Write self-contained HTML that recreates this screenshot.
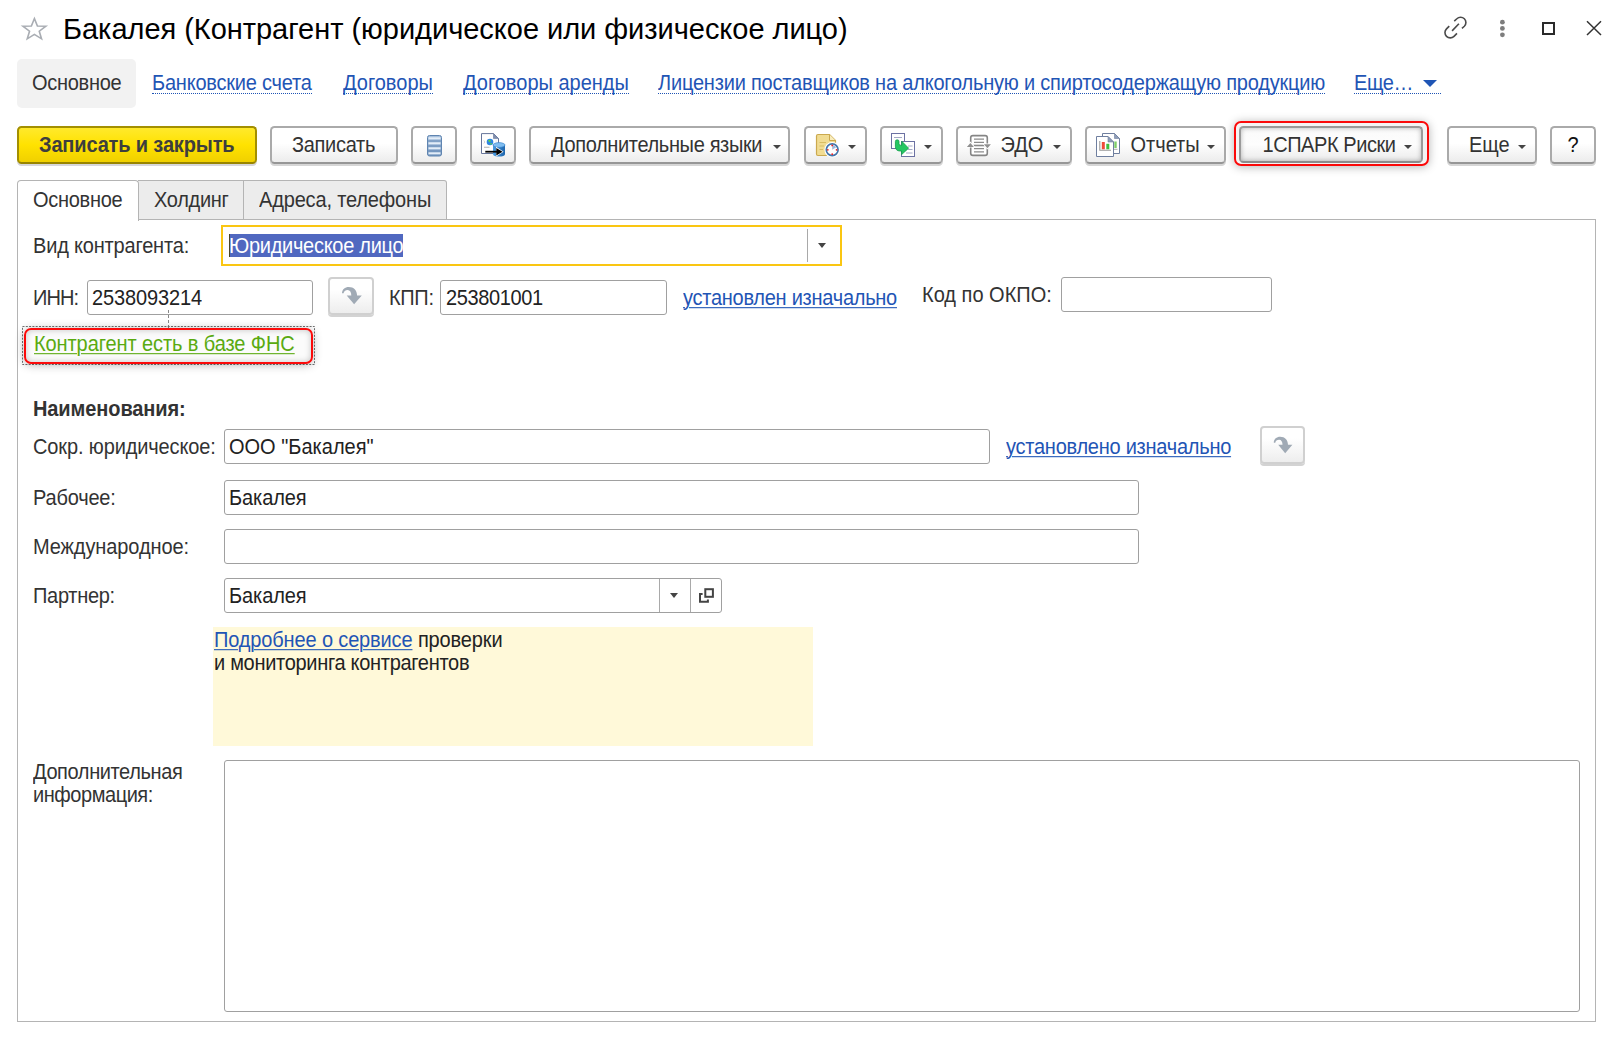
<!DOCTYPE html>
<html lang="ru">
<head>
<meta charset="utf-8">
<title>Бакалея (Контрагент (юридическое или физическое лицо)</title>
<style>
html,body{margin:0;padding:0;background:#fff;}
body{width:1618px;height:1039px;position:relative;overflow:hidden;font-family:"Liberation Sans",sans-serif;font-size:20px;line-height:24px;color:#333;}
.a{position:absolute;white-space:nowrap;}
.t{position:absolute;white-space:nowrap;height:24px;line-height:24px;transform:scaleY(1.07);transform-origin:0 19px;}
.lnk{color:#1f55b5;text-decoration:underline;text-decoration-thickness:1px;text-underline-offset:2px;}
.nav{color:#1f55b5;border-bottom:1px dotted #1f55b5;height:22px;line-height:24px;transform:none;}
.s{display:inline-block;transform:scaleY(1.07);transform-origin:0 19px;}
.btn{position:absolute;box-sizing:border-box;height:38px;top:126px;border:2px solid #aaa;border-bottom-color:#969696;border-radius:4.5px;background:linear-gradient(#ffffff 0%,#ffffff 45%,#ececec 100%);box-shadow:0 2px 0 #d6d6d6;}
.btn .t{top:5px;}
.arr{position:absolute;width:0;height:0;border-left:4px solid transparent;border-right:4px solid transparent;border-top:4px solid #444;}
.inp{position:absolute;box-sizing:border-box;border:1px solid #a0a0a0;border-radius:3px;background:#fff;}
</style>
</head>
<body>

<!-- title bar -->
<svg class="a" style="left:20px;top:15px" width="30" height="30" viewBox="0 0 30 30"><path transform="translate(14.4 0) scale(1.08 1) translate(-14.4 0)" d="M14.4 3.5 L17.2 10.9 L25.1 11.2 L18.9 16.2 L21.0 23.8 L14.4 19.4 L7.8 23.8 L9.9 16.2 L3.7 11.2 L11.6 10.9 Z" fill="none" stroke="#a9adb3" stroke-width="1.5" stroke-linejoin="miter"/></svg>
<div class="a" id="title" style="left:63px;top:11px;font-size:29px;line-height:36px;color:#000;letter-spacing:-0.03px;transform:scaleY(1.045);transform-origin:0 28px;">Бакалея (Контрагент (юридическое или физическое лицо)</div>

<svg class="a" style="left:1496px;top:16px" width="14" height="24" viewBox="0 0 14 24"><g fill="#7d7d7d"><circle cx="6.4" cy="6.2" r="2.4"/><circle cx="6.4" cy="12.4" r="2.4"/><circle cx="6.4" cy="18.8" r="2.4"/></g></svg>
<div class="a" style="left:1542px;top:22px;width:9px;height:9px;border:2px solid #2a2a2a;"></div>
<svg class="a" style="left:1584px;top:18px" width="20" height="20" viewBox="0 0 20 20"><path d="M3 3.2 L17 17 M17 3.2 L3 17" stroke="#333" stroke-width="1.5" fill="none"/></svg>

<!-- navigation -->
<div class="a" style="left:17px;top:58.5px;width:119px;height:49.5px;background:#f2f2f2;border-radius:5px;"></div>
<div class="t" style="left:32px;top:71px;color:#333;letter-spacing:-0.28px;">Основное</div>
<div class="t nav" style="left:152px;top:71px;letter-spacing:-0.22px;"><span class="s">Банковские счета</span></div>
<div class="t nav" style="left:343px;top:71px;"><span class="s">Договоры</span></div>
<div class="t nav" style="left:463px;top:71px;"><span class="s">Договоры аренды</span></div>
<div class="t nav" style="left:658px;top:71px;letter-spacing:-0.2px;"><span class="s">Лицензии поставщиков на алкогольную и спиртосодержащую продукцию</span></div>
<div class="t nav" style="left:1354px;top:71px;width:87px;letter-spacing:-0.4px;"><span class="s">Еще…</span></div>
<div class="arr" style="left:1423px;top:80px;border-left-width:7px;border-right-width:7px;border-top:7px solid #1f55b5;"></div>

<!-- toolbar -->
<div class="btn" id="b1" style="left:17px;width:240px;background:linear-gradient(#ffe92c 0%,#ffe200 50%,#f0d000 100%);border-color:#a38f00;border-bottom-color:#988400;box-shadow:0 2px 0 #d6d6da;"><div class="t" style="left:20px;font-weight:bold;color:#3e3e3e;letter-spacing:-0.15px;">Записать и закрыть</div></div>
<div class="btn" id="b2" style="left:270px;width:128px;"><div class="t" style="left:20px;letter-spacing:-0.31px;">Записать</div></div>
<div class="btn" id="b3" style="left:411px;width:46px;"></div>
<div class="btn" id="b4" style="left:470px;width:46px;"></div>
<div class="btn" id="b5" style="left:529px;width:261px;"><div class="t" style="left:20px;letter-spacing:-0.35px;">Дополнительные языки</div><div class="arr" style="left:241.5px;top:17px;"></div></div>
<div class="btn" id="b6" style="left:804px;width:63px;"><div class="arr" style="left:42.2px;top:17px;"></div></div>
<div class="btn" id="b7" style="left:880px;width:63px;"><div class="arr" style="left:42.2px;top:17px;"></div></div>
<div class="btn" id="b8" style="left:956px;width:116px;"><div class="t" style="left:42.5px;">ЭДО</div><div class="arr" style="left:95px;top:17px;"></div></div>
<div class="btn" id="b9" style="left:1085px;width:141px;"><div class="t" style="left:43.5px;">Отчеты</div><div class="arr" style="left:120px;top:17px;"></div></div>
<div class="a" style="left:1234px;top:121px;width:195px;height:45px;border-radius:7px;box-shadow:0 1px 10px rgba(0,0,0,.29);"></div>
<div class="a" style="left:1234px;top:121px;width:195px;height:45px;border-radius:7px;background:#f4f4f4;"></div>
<div class="btn" id="b10" style="left:1239px;width:184px;height:37px;background:linear-gradient(#fafafa 0%,#fdfdfd 50%,#ebebeb 100%);border-color:#9a9a9a;border-bottom-color:#8c8c8c;box-shadow:inset 0 0 5px rgba(0,0,0,.28);"><div class="t" style="left:21.5px;letter-spacing:-0.44px;">1СПАРК Риски</div><div class="arr" style="left:163px;top:17px;"></div></div>
<div class="a" style="left:1234px;top:121px;width:195px;height:45px;box-sizing:border-box;border:2px solid #fb0a0a;border-radius:7px;"></div>
<div class="btn" id="b11" style="left:1447px;width:90px;"><div class="t" style="left:20px;">Еще</div><div class="arr" style="left:69px;top:17px;"></div></div>
<div class="btn" id="b12" style="left:1550px;width:46px;"><div class="t" style="left:15.5px;color:#111;">?</div></div>

<!-- tabs + panel -->
<div class="a" id="panel" style="left:17px;top:219px;width:1579px;height:803px;box-sizing:border-box;border:1px solid #b4b4b4;"></div>
<div class="a" style="left:138px;top:180px;width:309px;height:40px;box-sizing:border-box;border:1px solid #b4b4b4;border-left:none;background:#ececec;border-radius:0 3px 0 0;"></div>
<div class="a" style="left:243px;top:181px;width:1px;height:38px;background:#b4b4b4;"></div>
<div class="a" style="left:17px;top:180px;width:122px;height:41px;box-sizing:border-box;border:1px solid #b4b4b4;border-bottom:none;background:#fff;border-radius:4px 4px 0 0;"></div>
<div class="t" style="left:33px;top:188px;letter-spacing:-0.28px;">Основное</div>
<div class="t" style="left:154px;top:188px;letter-spacing:-0.3px;">Холдинг</div>
<div class="t" style="left:259px;top:188px;letter-spacing:-0.16px;">Адреса, телефоны</div>

<!-- row: Вид контрагента -->
<div class="t" style="left:33px;top:234px;letter-spacing:-0.18px;">Вид контрагента:</div>
<div class="inp" style="left:221px;top:225px;width:621px;height:41px;border:2px solid #fac612;border-radius:0;"></div>
<div class="a" style="left:229px;top:234px;width:174px;height:23px;background:#5068c0;"></div>
<div class="a" style="left:229px;top:234px;width:1px;height:23px;background:#4a4526;"></div>
<div class="t" style="left:229px;top:234px;color:#fff;letter-spacing:-0.28px;">Юридическое лицо</div>
<div class="a" style="left:807px;top:229px;width:1px;height:33px;background:#a9a9a9;"></div>
<div class="arr" style="left:818px;top:243px;border-top-width:5px;"></div>

<!-- row: ИНН -->
<div class="t" style="left:33px;top:286px;letter-spacing:-0.95px;">ИНН:</div>
<div class="inp" style="left:87px;top:280px;width:226px;height:35px;"></div>
<div class="t" style="left:92px;top:286px;color:#222;letter-spacing:-0.13px;">2538093214</div>
<div class="btn" id="binn" style="left:328px;top:277px;width:46px;height:38px;background:linear-gradient(#fff 30%,#ededed);border-color:#d0d0d0;box-shadow:0 2px 0 #d3d3d3;border-radius:4px;"></div>
<div class="t" style="left:389px;top:286px;letter-spacing:-0.33px;">КПП:</div>
<div class="inp" style="left:440px;top:280px;width:227px;height:35px;"></div>
<div class="t" style="left:446px;top:286px;color:#222;letter-spacing:-0.37px;">253801001</div>
<div class="t lnk" style="left:683px;top:286px;letter-spacing:-0.26px;">установлен изначально</div>
<div class="t" style="left:922px;top:283px;">Код по ОКПО:</div>
<div class="inp" style="left:1061px;top:277px;width:211px;height:35px;"></div>

<!-- FNS link -->
<div class="a" style="left:168px;top:310px;width:0;height:18px;border-left:1px dashed #888;"></div>
<svg class="a" style="left:20px;top:324px" width="300" height="44" viewBox="0 0 300 44"><rect x="2.5" y="2.5" width="292" height="38" fill="none" stroke="#707070" stroke-width="1" stroke-dasharray="2 1.3"/></svg>
<div class="a" style="left:24px;top:328px;width:289px;height:36px;border-radius:7px;box-shadow:0 1px 10px rgba(0,0,0,.29);background:#fff;"></div>
<div class="a" style="left:24px;top:328px;width:289px;height:36px;box-sizing:border-box;border:2px solid #fb0a0a;border-radius:7px;box-shadow:inset 0 0 6px rgba(0,0,0,.22);background:#fbfbfb;"></div>
<div class="t" style="left:34px;top:332px;letter-spacing:-0.09px;color:#5aaa10;text-decoration:underline;text-decoration-thickness:1px;text-underline-offset:2px;">Контрагент есть в базе ФНС</div>

<!-- names -->
<div class="t" style="left:33px;top:397px;font-weight:bold;letter-spacing:-0.1px;">Наименования:</div>
<div class="t" style="left:33px;top:435px;letter-spacing:-0.13px;">Сокр. юридическое:</div>
<div class="inp" style="left:224px;top:429px;width:766px;height:35px;"></div>
<div class="t" style="left:229px;top:435px;color:#222;">ООО "Бакалея"</div>
<div class="t lnk" style="left:1006px;top:435px;letter-spacing:-0.25px;">установлено изначально</div>
<div class="btn" id="bname" style="left:1260px;top:426px;width:45px;height:38px;background:linear-gradient(#fff 30%,#ededed);border-color:#d0d0d0;box-shadow:0 2px 0 #d3d3d3;border-radius:4px;"></div>

<div class="t" style="left:33px;top:486px;letter-spacing:-0.19px;">Рабочее:</div>
<div class="inp" style="left:224px;top:480px;width:915px;height:35px;"></div>
<div class="t" style="left:229px;top:486px;color:#222;letter-spacing:-0.1px;">Бакалея</div>

<div class="t" style="left:33px;top:535px;letter-spacing:-0.1px;">Международное:</div>
<div class="inp" style="left:224px;top:529px;width:915px;height:35px;"></div>

<div class="t" style="left:33px;top:584px;letter-spacing:-0.3px;">Партнер:</div>
<div class="inp" style="left:224px;top:578px;width:498px;height:35px;"></div>
<div class="t" style="left:229px;top:584px;color:#222;letter-spacing:-0.1px;">Бакалея</div>
<div class="a" style="left:659px;top:579px;width:1px;height:33px;background:#a9a9a9;"></div>
<div class="a" style="left:690px;top:579px;width:1px;height:33px;background:#a9a9a9;"></div>
<div class="arr" style="left:670px;top:593px;border-top-width:5px;"></div>

<!-- yellow info -->
<div class="a" style="left:213px;top:627px;width:600px;height:119px;background:#fff9d9;"></div>
<div class="t" style="left:214px;top:628px;color:#222;letter-spacing:-0.14px;"><span class="lnk">Подробнее о сервисе</span> проверки</div>
<div class="t" style="left:214px;top:651px;color:#222;letter-spacing:-0.3px;">и мониторинга контрагентов</div>

<!-- additional info -->
<div class="t" style="left:33px;top:760px;letter-spacing:-0.39px;">Дополнительная</div>
<div class="t" style="left:33px;top:783px;letter-spacing:-0.45px;">информация:</div>
<div class="inp" style="left:224px;top:760px;width:1356px;height:252px;"></div>

<!-- icons overlay (page coordinates) -->
<svg class="a" style="left:0;top:0;pointer-events:none" width="1618" height="1039" viewBox="0 0 1618 1039">
<defs>
<linearGradient id="gl" x1="0" y1="0" x2="0" y2="1"><stop offset="0" stop-color="#a9c2de"/><stop offset="1" stop-color="#7396bf"/></linearGradient>
<linearGradient id="gdb" x1="0" y1="0" x2="1" y2="0"><stop offset="0" stop-color="#4a9be0"/><stop offset="1" stop-color="#1f66ad"/></linearGradient>
</defs>
<!-- list -->
<g>
<rect x="427.5" y="135.5" width="14" height="20.5" rx="2" fill="url(#gl)" stroke="#5f84b0" stroke-width="1"/>
<rect x="428.5" y="137.3" width="12" height="2" fill="#e3edf8"/>
<rect x="428.5" y="142.3" width="12" height="2" fill="#e3edf8"/>
<rect x="428.5" y="147.3" width="12" height="2" fill="#e3edf8"/>
<rect x="428.5" y="152.3" width="12" height="2" fill="#e3edf8"/>
<path d="M427.5 141 H441.5 M427.5 146 H441.5 M427.5 151 H441.5" stroke="#6a8db8" stroke-width="1"/>
</g>
<!-- doc -> db -->
<g>
<path d="M481.5 133.6 H493.5 L498.5 138.6 V153.5 H481.5 Z" fill="#fff" stroke="#66759a" stroke-width="1"/>
<path d="M493.5 133.6 V138.6 H498.5 Z" fill="#7f8eae" stroke="#66759a" stroke-width="0.6"/>
<path d="M484 147.3 H489.5" stroke="#bdbdbd" stroke-width="1.2"/>
<path d="M483.8 140.5 l1 1.5 l-1 1.5 M496 140.5 v1" stroke="#c9c9c9" stroke-width="0.8" fill="none"/>
<circle cx="490" cy="142" r="3.3" fill="#2d86e0"/>
<path d="M488.2 140.3 q1.5 -1 2.4 0.2 q0.6 1.2 -0.8 1.6 q-1.4 0.2 -1.6 -1.8 Z M490.3 143.2 q1.4 -0.6 1.8 0.6 q-0.6 1 -1.6 0.9 Z" fill="#5ed23c"/>
<path d="M493 145 V154.2 A6 2.4 0 0 0 505 154.2 V145 Z" fill="url(#gdb)"/>
<ellipse cx="499" cy="145" rx="6" ry="2.4" fill="#7fbdf0" stroke="#2f7cc8" stroke-width="0.6"/>
<path d="M496 146.8 L503.6 151.7 L496 156.6 Z" fill="#fff"/>
<path d="M485.3 151.7 H497" stroke="#000" stroke-width="1.8"/>
<path d="M496.3 147.9 L502.5 151.7 L496.3 155.5 Z" fill="#000"/>
</g>
<!-- doc + clock -->
<g>
<path d="M818 134.5 H829.5 L835.5 140.5 V154 Q835.5 155.5 834 155.5 H818 Q816.5 155.5 816.5 154 V136 Q816.5 134.5 818 134.5 Z" fill="#f1dc92" stroke="#cba94f" stroke-width="1.2"/>
<path d="M829.5 134.5 V140.5 H835.5" fill="#f8ecbd" stroke="#cba94f" stroke-width="1"/>
<path d="M819.5 142.5 H826 M819.5 146 H824 M819.5 149.5 H823" stroke="#d8bd63" stroke-width="1.2"/>
<circle cx="832.2" cy="149.8" r="7.8" fill="#fff"/>
<circle cx="832.2" cy="149.8" r="5.9" fill="#fff" stroke="#4476ab" stroke-width="1.7"/>
<path d="M832.2 149.8 L832.2 145 A4.8 4.8 0 0 1 836.2 147.2 Z" fill="#9fb8dc"/>
<circle cx="832.2" cy="145.4" r="0.9" fill="#f02020"/><circle cx="836.6" cy="149.8" r="0.9" fill="#f02020"/><circle cx="832.2" cy="154.2" r="0.9" fill="#f02020"/><circle cx="827.8" cy="149.8" r="0.9" fill="#f02020"/>
</g>
<!-- copy docs + green arrow -->
<g>
<rect x="891.5" y="133.5" width="13" height="15" fill="#fff" stroke="#6c72a3" stroke-width="1"/>
<path d="M894 137.5 H902" stroke="#9aa0c0" stroke-width="0.9"/>
<rect x="901.5" y="141.5" width="13" height="15" fill="#fff" stroke="#6c72a3" stroke-width="1"/>
<path d="M908 146 H912.5 M908 149.5 H912.5 M906 153 H912.5" stroke="#9aa0c0" stroke-width="0.9"/>
<path d="M895.4 141.4 Q895.4 139.8 897.2 139.8 Q899 139.8 899 141.4 V143.6 Q899 145.2 900.6 145.2 H901.8 V141.3 L908.6 148.2 L901.6 154.6 V151 H900 Q895.4 151 895.4 146.2 Z" fill="#25c763" stroke="#0f9d49" stroke-width="0.8" stroke-linejoin="round"/>
</g>
<!-- EDO -->
<g>
<rect x="970.7" y="135.6" width="16.6" height="19.8" rx="2.2" fill="#fff" stroke="#858585" stroke-width="1.6"/>
<path d="M974 139.2 H984 M974 142.3 H984 M974 148.7 H984 M974 151.8 H984" stroke="#8c8c8c" stroke-width="1.3"/>
<path d="M973.5 145.5 H984.5" stroke="#8a8a8a" stroke-width="1.6"/>
<path d="M965.4 147.6 H975.4 L970.4 141.6 Z" fill="#fff"/>
<path d="M982.4 143.6 H992.4 L987.4 149.6 Z" fill="#fff"/>
<path d="M966.9 147 H973.9 L970.4 143 Z" fill="#8f8f8f"/>
<path d="M983.9 144.2 H990.9 L987.4 148.2 Z" fill="#8f8f8f"/>
</g>
<!-- reports -->
<g>
<path d="M1102.5 133.5 H1114.5 L1119.5 138.5 V153.5 H1102.5 Z" fill="#fff" stroke="#6f7f9f" stroke-width="1"/>
<path d="M1114.5 133.5 V138.5 H1119.5 Z" fill="#8f9db8" stroke="#6f7f9f" stroke-width="0.6"/>
<rect x="1114.3" y="141.5" width="2.4" height="6.5" fill="#7fce6a"/>
<path d="M1112 149.3 H1117.5" stroke="#aaa" stroke-width="1"/>
<path d="M1096.5 136.5 H1108 L1113.5 142 V156.5 H1096.5 Z" fill="#fff" stroke="#6f7f9f" stroke-width="1"/>
<path d="M1108 136.5 V142 H1113.5 Z" fill="#8f9db8" stroke="#6f7f9f" stroke-width="0.6"/>
<rect x="1101.8" y="142" width="3" height="7.3" fill="#ee4b3a"/>
<rect x="1106.3" y="143.8" width="3" height="5.5" fill="#3fbf3f"/>
<path d="M1099.8 141 V150.2 H1111" stroke="#999" stroke-width="1.1" fill="none"/>
</g>
<!-- open icon -->
<g fill="none" stroke="#444" stroke-width="2"><rect x="705.3" y="589.2" width="7.6" height="7.6"/><path d="M702.6 594.1 H700 V601.8 H707.9 V599.4"/></g>
<!-- link icon -->
<g fill="none" stroke="#4a4a4a" stroke-width="1.6" stroke-linecap="butt">
<path d="M1454.25 21.1 L1456.85 18.75 A5.3 5.3 0 0 1 1464.35 26.25 L1461.95 28.4"/>
<path d="M1449.25 26.1 L1446.5 28.85 A5.3 5.3 0 0 0 1454 36.35 L1456.95 33.4"/>
<path d="M1452.1 30.9 L1458.9 23.8"/>
</g>
<!-- curved arrows -->
<path d="M342 293.2 C342 289.2 345 286.9 348.8 286.9 C353.8 286.9 357 290.3 357.1 295.4 L361.8 295.4 L354.1 304.2 L346.7 295.4 L351.3 295.4 C351.3 292 350 289.9 347.6 289.9 C345.4 289.9 343.8 291.2 343.6 293.2 Z" fill="#a0aab5"/>
<path transform="translate(1283.1 445) scale(0.94) translate(-351.9 -295.55)" d="M342 293.2 C342 289.2 345 286.9 348.8 286.9 C353.8 286.9 357 290.3 357.1 295.4 L361.8 295.4 L354.1 304.2 L346.7 295.4 L351.3 295.4 C351.3 292 350 289.9 347.6 289.9 C345.4 289.9 343.8 291.2 343.6 293.2 Z" fill="#a0aab5"/>
</svg>

</body>
</html>
